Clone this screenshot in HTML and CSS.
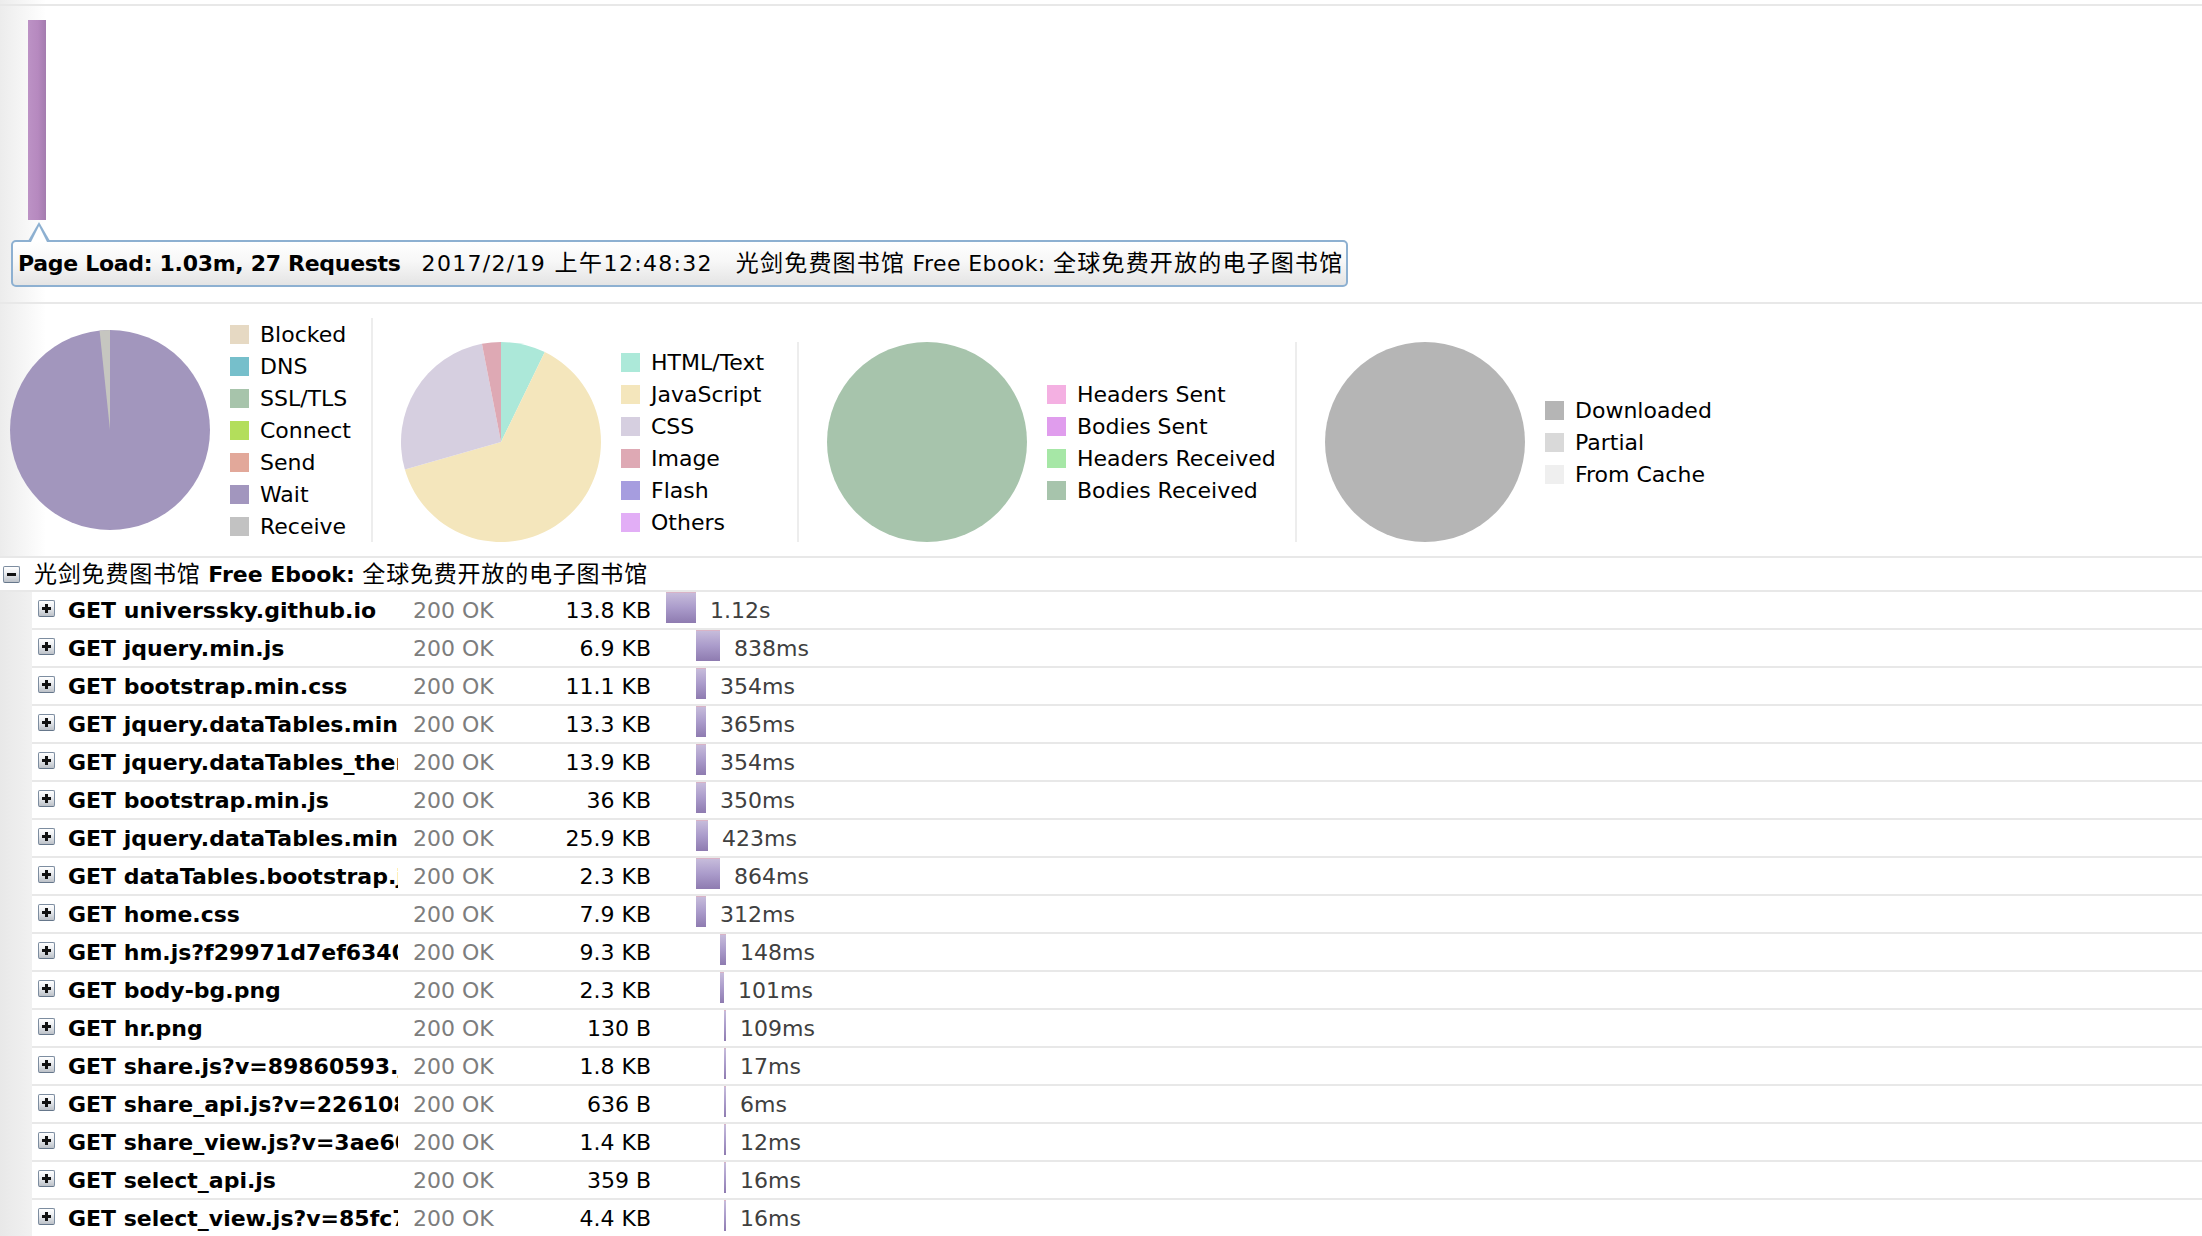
FILE: index.html
```html
<!DOCTYPE html>
<html lang="zh">
<head>
<meta charset="utf-8">
<title>Overview</title>
<link rel="stylesheet" href="styles.css">
</head>
<body>
<div class="page">
  <section class="timeline">
    <div class="tl-bar"></div>
    <div class="tip">
      <span class="tip-caret"></span>
      <span class="tip-main">Page Load: 1.03m, 27 Requests</span>
      <span class="tip-date">2017/2/19 <span class="cjk">上午</span>12:48:32</span>
      <span class="tip-title"><span class="cjk">光剑免费图书馆</span> Free Ebook: <span class="cjk">全球免费开放的电子图书馆</span></span>
    </div>
  </section>

  <section class="charts">
    <div class="chart first">
      <svg class="pie" viewBox="0 0 200 200" width="200" height="200">
        <circle cx="100" cy="100" r="100" fill="#a296bd"/>
        <path d="M100,100 L89.55,0.55 A100,100 0 0,1 100,0 Z" fill="#c6c6c0"/>
      </svg>
      <ul class="legend lg1">
        <li><i class="sw blocked"></i>Blocked</li>
        <li><i class="sw dns"></i>DNS</li>
        <li><i class="sw ssl"></i>SSL/TLS</li>
        <li><i class="sw connect"></i>Connect</li>
        <li><i class="sw send"></i>Send</li>
        <li><i class="sw wait"></i>Wait</li>
        <li><i class="sw receive"></i>Receive</li>
      </ul>
    </div>
    <div class="chart">
      <svg class="pie" viewBox="0 0 200 200" width="200" height="200">
        <path d="M100,100 L100,0 A100,100 0 0,1 143.8,10.1 Z" fill="#ace8d9"/>
        <path d="M100,100 L143.8,10.1 A100,100 0 1,1 3.87,127.56 Z" fill="#f4e6bc"/>
        <path d="M100,100 L3.87,127.56 A100,100 0 0,1 80.92,1.84 Z" fill="#d6cfe0"/>
        <path d="M100,100 L80.92,1.84 A100,100 0 0,1 100,0 Z" fill="#dea9b4"/>
      </svg>
      <ul class="legend lg2">
        <li><i class="sw html"></i>HTML/Text</li>
        <li><i class="sw js"></i>JavaScript</li>
        <li><i class="sw css"></i>CSS</li>
        <li><i class="sw image"></i>Image</li>
        <li><i class="sw flash"></i>Flash</li>
        <li><i class="sw others"></i>Others</li>
      </ul>
    </div>
    <div class="chart">
      <svg class="pie" viewBox="0 0 200 200" width="200" height="200">
        <circle cx="100" cy="100" r="100" fill="#a7c4ac"/>
      </svg>
      <ul class="legend lg3">
        <li><i class="sw hsent"></i>Headers Sent</li>
        <li><i class="sw bsent"></i>Bodies Sent</li>
        <li><i class="sw hrecv"></i>Headers Received</li>
        <li><i class="sw brecv"></i>Bodies Received</li>
      </ul>
    </div>
    <div class="chart last">
      <svg class="pie" viewBox="0 0 200 200" width="200" height="200">
        <circle cx="100" cy="100" r="100" fill="#b5b5b5"/>
      </svg>
      <ul class="legend">
        <li><i class="sw down"></i>Downloaded</li>
        <li><i class="sw partial"></i>Partial</li>
        <li><i class="sw cache"></i>From Cache</li>
      </ul>
    </div>
  </section>

  <div class="root-row">
    <span class="tg minus"></span>
    <span class="root-title"><span class="cjk">光剑免费图书馆</span> Free Ebook: <span class="cjk">全球免费开放的电子图书馆</span></span>
  </div>

  <div class="tree">
    <div class="req"><span class="tg plus"></span><span class="name">GET universsky.github.io</span><span class="status">200 OK</span><span class="size">13.8 KB</span><span class="timing"><span class="bar" style="margin-left:15px;width:30px"></span><span class="dur">1.12s</span></span></div>
    <div class="req"><span class="tg plus"></span><span class="name">GET jquery.min.js</span><span class="status">200 OK</span><span class="size">6.9 KB</span><span class="timing"><span class="bar" style="margin-left:45px;width:24px"></span><span class="dur">838ms</span></span></div>
    <div class="req"><span class="tg plus"></span><span class="name">GET bootstrap.min.css</span><span class="status">200 OK</span><span class="size">11.1 KB</span><span class="timing"><span class="bar" style="margin-left:45px;width:10px"></span><span class="dur">354ms</span></span></div>
    <div class="req"><span class="tg plus"></span><span class="name">GET jquery.dataTables.min.css</span><span class="status">200 OK</span><span class="size">13.3 KB</span><span class="timing"><span class="bar" style="margin-left:45px;width:10px"></span><span class="dur">365ms</span></span></div>
    <div class="req"><span class="tg plus"></span><span class="name">GET jquery.dataTables_themeroller.css</span><span class="status">200 OK</span><span class="size">13.9 KB</span><span class="timing"><span class="bar" style="margin-left:45px;width:10px"></span><span class="dur">354ms</span></span></div>
    <div class="req"><span class="tg plus"></span><span class="name">GET bootstrap.min.js</span><span class="status">200 OK</span><span class="size">36 KB</span><span class="timing"><span class="bar" style="margin-left:45px;width:10px"></span><span class="dur">350ms</span></span></div>
    <div class="req"><span class="tg plus"></span><span class="name">GET jquery.dataTables.min.js</span><span class="status">200 OK</span><span class="size">25.9 KB</span><span class="timing"><span class="bar" style="margin-left:45px;width:12px"></span><span class="dur">423ms</span></span></div>
    <div class="req"><span class="tg plus"></span><span class="name">GET dataTables.bootstrap.js</span><span class="status">200 OK</span><span class="size">2.3 KB</span><span class="timing"><span class="bar" style="margin-left:45px;width:24px"></span><span class="dur">864ms</span></span></div>
    <div class="req"><span class="tg plus"></span><span class="name">GET home.css</span><span class="status">200 OK</span><span class="size">7.9 KB</span><span class="timing"><span class="bar" style="margin-left:45px;width:10px"></span><span class="dur">312ms</span></span></div>
    <div class="req"><span class="tg plus"></span><span class="name">GET hm.js?f29971d7ef6340c1cc52d4a8b0f4f1b9</span><span class="status">200 OK</span><span class="size">9.3 KB</span><span class="timing"><span class="bar" style="margin-left:69px;width:6px"></span><span class="dur">148ms</span></span></div>
    <div class="req"><span class="tg plus"></span><span class="name">GET body-bg.png</span><span class="status">200 OK</span><span class="size">2.3 KB</span><span class="timing"><span class="bar" style="margin-left:69px;width:4px"></span><span class="dur">101ms</span></span></div>
    <div class="req"><span class="tg plus"></span><span class="name">GET hr.png</span><span class="status">200 OK</span><span class="size">130 B</span><span class="timing"><span class="bar" style="margin-left:73px;width:2px"></span><span class="dur">109ms</span></span></div>
    <div class="req"><span class="tg plus"></span><span class="name">GET share.js?v=89860593.js</span><span class="status">200 OK</span><span class="size">1.8 KB</span><span class="timing"><span class="bar" style="margin-left:73px;width:2px"></span><span class="dur">17ms</span></span></div>
    <div class="req"><span class="tg plus"></span><span class="name">GET share_api.js?v=226108fe.js</span><span class="status">200 OK</span><span class="size">636 B</span><span class="timing"><span class="bar" style="margin-left:73px;width:2px"></span><span class="dur">6ms</span></span></div>
    <div class="req"><span class="tg plus"></span><span class="name">GET share_view.js?v=3ae6026d.js</span><span class="status">200 OK</span><span class="size">1.4 KB</span><span class="timing"><span class="bar" style="margin-left:73px;width:2px"></span><span class="dur">12ms</span></span></div>
    <div class="req"><span class="tg plus"></span><span class="name">GET select_api.js</span><span class="status">200 OK</span><span class="size">359 B</span><span class="timing"><span class="bar" style="margin-left:73px;width:2px"></span><span class="dur">16ms</span></span></div>
    <div class="req"><span class="tg plus"></span><span class="name">GET select_view.js?v=85fc7cec.js</span><span class="status">200 OK</span><span class="size">4.4 KB</span><span class="timing"><span class="bar" style="margin-left:73px;width:2px"></span><span class="dur">16ms</span></span></div>
  </div>
</div>
</body>
</html>
```

FILE: styles.css
```css
html, body {
  margin: 0;
  padding: 0;
  height: 100%;
  overflow: hidden;
}

body {
  font-family: "DejaVu Sans", "Noto Sans CJK SC", sans-serif;
  font-size: 22px;
  color: #000;
  background: linear-gradient(to right, #ececec 0, #f6f6f6 24px, #ffffff 46px);
}

.page {
  padding-top: 4px;
}

.cjk {
  font-family: "Noto Sans CJK SC", sans-serif;
  font-size: 23px;
  letter-spacing: 0.8px;
  line-height: 1;
}

/* ---------- timeline ---------- */
.timeline {
  position: relative;
  height: 296px;
  border-top: 2px solid #e8e8e8;
  border-bottom: 2px solid #e8e8e8;
}

.tl-bar {
  position: absolute;
  left: 28px;
  top: 14px;
  width: 18px;
  height: 200px;
  background: linear-gradient(to right, #bc92c5 0, #b689bf 55%, #a47caf 100%);
}

.tip {
  position: absolute;
  left: 11px;
  top: 234px;
  width: 1337px;
  height: 47px;
  box-sizing: border-box;
  border: 2px solid #8db0d1;
  border-radius: 5px;
  background: linear-gradient(#ffffff 0, #f7f7f7 45%, #e4e4e4 100%);
  display: flex;
  align-items: center;
  padding-left: 5px;
  line-height: 28px;
  white-space: nowrap;
}

.tip-caret {
  position: absolute;
  left: 15px;
  top: -20px;
  width: 0;
  height: 0;
  border-left: 11px solid transparent;
  border-right: 11px solid transparent;
  border-bottom: 19px solid #8db0d1;
}

.tip-caret::after {
  content: "";
  position: absolute;
  left: -8px;
  top: 4px;
  border-left: 8px solid transparent;
  border-right: 8px solid transparent;
  border-bottom: 16px solid #ffffff;
}

.tip-main {
  font-weight: bold;
  letter-spacing: -0.3px;
}

.tip-date {
  margin-left: 21px;
  letter-spacing: 1.3px;
}

.tip-date .cjk {
  letter-spacing: 1.6px;
}

.tip-title {
  margin-left: 23px;
  letter-spacing: 0.4px;
}

.tip-title .cjk {
  letter-spacing: 1.2px;
}

/* ---------- charts ---------- */
.charts {
  display: flex;
  align-items: flex-end;
  padding: 14px 0;
  border-bottom: 2px solid #e8e8e8;
}

.chart {
  display: flex;
  align-items: center;
  padding-left: 28px;
  border-right: 2px solid #ededed;
}

.chart.first {
  padding-left: 10px;
}

.chart.last {
  border-right: none;
}

.pie {
  display: block;
  width: 200px;
  height: 200px;
  flex: none;
}

.legend {
  list-style: none;
  margin: 0 0 0 20px;
  padding: 0;
}

.lg1 { width: 141px; }
.lg2 { width: 176px; }
.lg3 { width: 248px; }

.legend li {
  display: flex;
  align-items: center;
  height: 32px;
  white-space: nowrap;
}

.sw {
  display: block;
  width: 19px;
  height: 19px;
  margin-right: 11px;
  flex: none;
}

.blocked { background: #e6d9c3; }
.dns { background: #76bfcb; }
.ssl { background: #a7c4ab; }
.connect { background: #b3de5b; }
.send { background: #e2a89a; }
.wait { background: #a296be; }
.receive { background: #c2c2c2; }

.html { background: #ace9d9; }
.js { background: #f4e6bc; }
.css { background: #d6cfe0; }
.image { background: #dea9b4; }
.flash { background: #a69ddf; }
.others { background: #e2aef6; }

.hsent { background: #f4b0e2; }
.bsent { background: #e09ded; }
.hrecv { background: #a6e7a6; }
.brecv { background: #a7c4ac; }

.down { background: #b5b5b5; }
.partial { background: #d9d9d9; }
.cache { background: #efefef; }

/* ---------- tree ---------- */
.tg {
  position: relative;
  display: block;
  flex: none;
  width: 15px;
  height: 15px;
  border: 1px solid #7d8da0;
  border-bottom-color: #66778b;
  border-radius: 2px;
  background: linear-gradient(#ffffff 0, #eceef1 40%, #bcc1c8 100%);
}

.tg::before {
  content: "";
  position: absolute;
  left: 3px;
  top: 6px;
  width: 9px;
  height: 3px;
  background: #111;
}

.tg.plus::after {
  content: "";
  position: absolute;
  left: 6px;
  top: 3px;
  width: 3px;
  height: 9px;
  background: #111;
}

.root-row {
  display: flex;
  align-items: center;
  height: 32px;
  padding-left: 3px;
  background: #ffffff;
  border-bottom: 2px solid #e8e8e8;
}

.root-title {
  margin-left: 14px;
  font-weight: bold;
  white-space: nowrap;
}

.root-title .cjk {
  font-weight: normal;
}

.tree {
  background: linear-gradient(to right, #e8e8e8 0, #f1f1f1 32px, transparent 32px);
}

.req {
  display: flex;
  align-items: center;
  height: 36px;
  margin-left: 32px;
  background: #ffffff;
  border-bottom: 2px solid #e8e8e8;
  white-space: nowrap;
}

.req .tg {
  margin-left: 6px;
  margin-top: -3px;
}

.name {
  width: 330px;
  margin-left: 13px;
  overflow: hidden;
  font-weight: bold;
  flex: none;
}

.status {
  width: 140px;
  margin-left: 15px;
  color: #7d7d7d;
  flex: none;
}

.size {
  width: 98px;
  text-align: right;
  flex: none;
}

.timing {
  display: flex;
  align-items: center;
  align-self: stretch;
}

.bar {
  display: block;
  align-self: flex-start;
  height: 31px;
  background: linear-gradient(#c8bedc 0, #ab9ccb 50%, #8e7bb0 100%);
  box-shadow: inset 0 1px 0 #d9b3c6;
  flex: none;
}

.dur {
  margin-left: 14px;
  color: #404040;
}
```
